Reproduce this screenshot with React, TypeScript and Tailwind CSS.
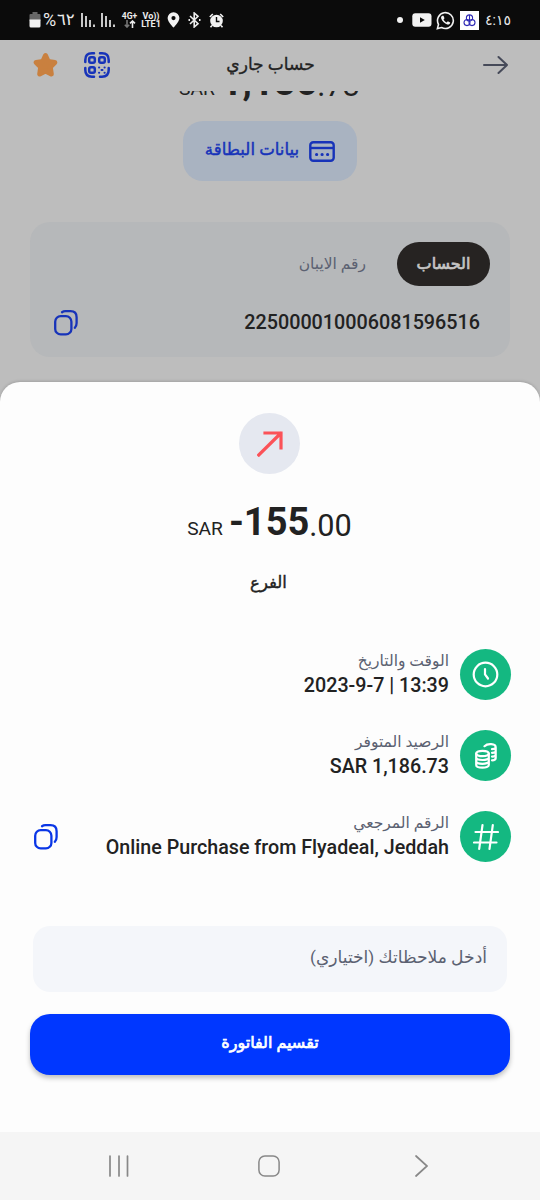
import type { ReactNode } from "react";

interface AmountProps {
  whole: string;
  fraction: string;
}

const Amount: React.FC<AmountProps> = ({ whole, fraction }) => (
  <div className="flex h-10 items-baseline justify-center whitespace-pre pr-px leading-10 text-[#222]">
    <span className="mr-1.5 text-[19.2px]">SAR</span>
    <span className="text-[38px] font-bold">{whole}</span>
    <span className="relative top-px text-[30.7px]">{fraction}</span>
  </div>
);

const CopyIcon: React.FC<{ color: string }> = ({ color }) => (
  <svg width="24" height="26" viewBox="0 0 24 26" fill="none" stroke={color} strokeWidth="2.3" strokeLinecap="round">
    <rect x="1.2" y="6.2" width="16.2" height="18.2" rx="5.5" />
    <path d="M8 2.2C9 1.5 10 1.2 11.5 1.2H16.5C20.5 1.2 22.6 3.3 22.6 7.3V13C22.6 15.2 22 16.8 20.8 17.8" />
  </svg>
);

const QrIcon = () => (
  <svg width="26" height="26" viewBox="0 0 26 26" fill="none" stroke="#1733b9" strokeWidth="2.5" strokeLinecap="round">
    <path d="M1.3 10V8C1.3 3.7 3.7 1.3 8 1.3H10M16 1.3H18C22.3 1.3 24.7 3.7 24.7 8V10M1.3 16V18C1.3 22.3 3.7 24.7 8 24.7H10M16 24.7H18C22.3 24.7 24.7 22.3 24.7 18V16" />
    <rect x="5.2" y="5.2" width="5.6" height="5.6" rx="1.8" />
    <rect x="15.2" y="5.2" width="5.6" height="5.6" rx="1.8" />
    <rect x="5.2" y="15.2" width="5.6" height="5.6" rx="1.8" />
    <path strokeWidth="2" d="M15 15.5H15.2M20.5 15.5H20.7M17.5 18H18.5M15 20.8H15.2M20.5 20.8H20.7" />
  </svg>
);

const StatusBar = () => (
  <div className="flex h-10 shrink-0 items-center justify-between bg-[#0b0b0b] pl-[29px] pr-[29px] text-[#ececec]">
    <div className="flex items-center">
      <svg width="12" height="16" viewBox="0 0 12 16">
        <path fill="#666" d="M3.5 0H8.5V2H10.5Q11.5 2 11.5 3V9H.5V3Q.5 2 1.5 2H3.5Z" />
        <path fill="#f2f2f2" d="M.5 7.5H11.5V14Q11.5 15.5 10 15.5H2Q.5 15.5.5 14Z" />
      </svg>
      <span className="ml-[2px] w-[14px] text-[18px] leading-5">%</span>
      <span className="w-[18px] text-[16.5px] leading-5">٦٢</span>
      <svg className="ml-1.5" width="34" height="16" viewBox="0 0 34 16" stroke="#ececec" strokeWidth="1.7">
        <path d="M1 1V15M5 4V15M9 8V15M13 12.5V15M21 1V15M25 4V15M29 8V15M33 12.5V15" />
      </svg>
      <div className="ml-[6px] flex w-[17px] flex-col items-center text-[8.5px] font-bold leading-[8px]">
        <span>4G+</span>
        <svg width="12" height="8" viewBox="0 0 12 8" fill="none" strokeWidth="1.6">
          <path stroke="#777" d="M3 0V7M.8 4.7L3 7L5.2 4.7" />
          <path stroke="#ececec" d="M8.5 8V1M6 3.3L8.5 1L11 3.3" />
        </svg>
      </div>
      <div className="ml-[3px] flex w-5 flex-col items-center text-[9px] font-bold leading-[8px]">
        <span>Vo))</span>
        <span>LTE1</span>
      </div>
      <svg className="ml-[6px]" width="13" height="16" viewBox="0 0 13 16">
        <path fill="#f2f2f2" fillRule="evenodd" d="M6.5.3A5.8 5.8 0 0 0 .6 6.1C.6 10 6.5 15.7 6.5 15.7S12.4 10 12.4 6.1A5.8 5.8 0 0 0 6.5.3ZM6.5 4A2.1 2.1 0 1 1 6.5 8.2A2.1 2.1 0 0 1 6.5 4Z" />
      </svg>
      <svg className="ml-[7px]" width="15" height="16" viewBox="0 0 15 16" fill="none" stroke="#ececec" strokeWidth="1.6">
        <path d="M3 4L11 11.7L7.2 15V1L11 4.3L3 12" />
        <path d="M1.5 8H3M12 8H13.5" strokeWidth="1.8" />
      </svg>
      <svg className="ml-[7px]" width="15" height="15" viewBox="0 0 15 15">
        <circle cx="7.5" cy="8" r="6.3" fill="#f2f2f2" />
        <path fill="none" stroke="#f2f2f2" strokeWidth="1.6" d="M.8 4L3.8 1M14.2 4L11.2 1M3 12.5L1.5 14.3M12 12.5L13.5 14.3" />
        <path fill="none" stroke="#0b0b0b" strokeWidth="1.4" d="M7.5 4V8.5H10.5" />
      </svg>
    </div>
    <div className="flex items-center">
      <span className="size-[6px] rounded-full bg-[#f2f2f2]" />
      <svg className="ml-[9px]" width="20" height="14" viewBox="0 0 20 14">
        <rect x=".3" y=".3" width="19.2" height="13.4" rx="3" fill="#f2f2f2" />
        <path fill="#0b0b0b" d="M8 4.2L12.8 7L8 9.8Z" />
      </svg>
      <svg className="ml-1" width="19" height="19" viewBox="0 0 19 19">
        <path fill="none" stroke="#f2f2f2" strokeWidth="1.6" d="M1.4 17.6L2.5 13.4A7.9 7.9 0 1 1 5.6 16.5Z" />
        <path fill="#f2f2f2" d="M6.3 4.8C5.2 5.4 4.8 6.6 5.3 7.8C6.5 10.7 8.5 12.6 11.3 13.5C12.8 13.9 14 13.1 14.2 11.5L11.8 10.3L10.7 11.5C9.2 10.8 8.3 9.9 7.5 8.4L8.5 7.3L7.5 4.8Z" />
      </svg>
      <div className="ml-[5px] flex size-[19px] items-center justify-center bg-white">
        <svg width="13" height="13" viewBox="0 0 13 13" fill="none" stroke="#302bb5" strokeWidth="1.1">
          <circle cx="6.5" cy="4" r="3.1" />
          <circle cx="4" cy="8.6" r="3" />
          <circle cx="9" cy="8.6" r="3" />
          <path d="M6.5 1V6" />
        </svg>
      </div>
      <span dir="ltr" className="ml-[6px] w-[26px] text-[14px] leading-5">
        ٤:١٥
      </span>
    </div>
  </div>
);

interface DetailRowProps {
  label: string;
  value: string;
  icon: ReactNode;
  action?: ReactNode;
}

const DetailRow: React.FC<DetailRowProps> = ({ label, value, icon, action }) => (
  <div className="flex h-[51px] items-center pl-[34px] pr-[29px]">
    {action}
    <div className="ml-auto flex flex-col items-end">
      <span dir="rtl" className="-mt-[2px] mb-[2px] text-[15.5px] leading-6 text-[#5b6171]">{label}</span>
      <span className="-mt-px whitespace-nowrap text-[19.7px] font-medium leading-6 text-[#222]">{value}</span>
    </div>
    <div className="ml-[11px] flex size-[51px] items-center justify-center rounded-full bg-[#14b881]">{icon}</div>
  </div>
);

const App: React.FC = () => {
  return (
    <div className="flex h-[1200px] w-[540px] flex-col overflow-hidden bg-[#bdbdbd] font-[Roboto,'DejaVu_Sans',sans-serif]">
      <StatusBar />

      <header className="flex h-[51px] shrink-0 items-center justify-between pb-px pl-[33px] pr-[32px]">
        <div className="flex w-[77px] items-center justify-between">
          <svg width="25" height="26" viewBox="0 0 25 26">
            <path fill="#c9803f" stroke="#c9803f" strokeWidth="5" strokeLinejoin="round" d="M12.5 3.5L15.2 9.5L21.8 10.4L17.3 15.1L18.3 22L12.5 19L6.7 22L7.7 15.1L3.2 10.4L9.8 9.5Z" />
          </svg>
          <QrIcon />
        </div>
        <h1 dir="rtl" className="mb-[3px] text-[17px] leading-7 text-[#222] [-webkit-text-stroke:0.35px_#222]">حساب جاري</h1>
        <div className="flex w-[77px] justify-end">
          <svg width="25" height="20" viewBox="0 0 25 20" fill="none" stroke="#464a59" strokeWidth="2" strokeLinecap="round" strokeLinejoin="round">
            <path d="M1 10H24M15.5 2L24 10L15.5 18" />
          </svg>
        </div>
      </header>

      {/* balance scrolled under the header */}
      <div className="flex h-[30px] shrink-0 flex-col overflow-hidden">
        <div className="-mt-[29px]">
          <Amount whole="1,186" fraction=".73" />
        </div>
      </div>

      <div className="mx-auto flex h-[60px] w-[174px] shrink-0 items-center justify-center gap-[10px] rounded-[20px] bg-[#a9b3c1]">
        <span dir="rtl" className="mb-[3px] text-[16.6px] leading-6 text-[#1733b9] [-webkit-text-stroke:0.45px_#1733b9]">بيانات البطاقة</span>
        <svg width="26" height="21" viewBox="0 0 26 21" fill="none" stroke="#1733b9" strokeWidth="2.4">
          <rect x="1.3" y="1.3" width="23.4" height="18.4" rx="3" />
          <path d="M1.3 7H24.7" />
          <path strokeLinecap="round" strokeWidth="3" d="M7.5 13.5H7.7M13 13.5H13.2M18.5 13.5H18.7" />
        </svg>
      </div>

      <section className="mx-[30px] mt-[41px] h-[135px] shrink-0 rounded-[20px] bg-[#b6b8ba] pt-5">
        <div className="flex items-center justify-end gap-[31px] pr-5">
          <span dir="rtl" className="text-[15.5px] leading-6 text-[#5b6171]">رقم الايبان</span>
          <span dir="rtl" className="flex h-11 w-[93px] items-center justify-center rounded-full bg-[#262322] text-[16px] leading-6 text-[#c4c4c4] [-webkit-text-stroke:0.7px_#c4c4c4]">
            الحساب
          </span>
        </div>
        <div className="mt-[22px] flex items-center justify-between pl-6 pr-[30px]">
          <CopyIcon color="#1733b9" />
          <span className="pt-px text-[19.75px] font-medium leading-7 text-[#222]">225000010006081596516</span>
        </div>
      </section>

      <main className="mt-[25px] flex h-[750px] shrink-0 flex-col rounded-t-[20px] bg-[#fdfdfd] pt-[31px] shadow-[0_-1px_3px_rgba(0,0,0,0.15)]">
        <div className="ml-[239px] flex size-[61px] items-center justify-center rounded-full bg-[#e5e8f0]">
          <svg width="26" height="26" viewBox="0 0 26 26" fill="none" stroke="#fb5258" strokeWidth="3.2" strokeLinecap="square">
            <path d="M1.8 24L23.5 2.5M8 2H24V17" />
          </svg>
        </div>
        <div className="mt-[28px]">
          <Amount whole="-155" fraction=".00" />
        </div>
        <p dir="rtl" className="mt-[27px] pr-[3px] text-center text-[16.5px] leading-7 text-[#222] [-webkit-text-stroke:0.4px_#222]">الفرع</p>

        <div className="mt-[52px] flex flex-col gap-[30px]">
          <DetailRow
            label="الوقت والتاريخ"
            value="2023-9-7 | 13:39"
            icon={
              <svg width="27" height="27" viewBox="0 0 27 27" fill="none" stroke="#fff" strokeWidth="2.2" strokeLinecap="round">
                <circle cx="13.5" cy="13.5" r="11.8" />
                <path d="M13 8V13.5L16 17.5" />
              </svg>
            }
          />
          <DetailRow
            label="الرصيد المتوفر"
            value="SAR 1,186.73"
            icon={
              <svg width="22" height="26" viewBox="0 0 22 26" fill="none" stroke="#fff" strokeWidth="2.2" strokeLinecap="round">
                <ellipse cx="7.5" cy="10.5" rx="6.3" ry="2.7" />
                <path d="M1.2 10.5V22C1.2 25.5 13.8 25.5 13.8 22V10.5M1.2 14.5C1.2 17.8 13.8 17.8 13.8 14.5M1.2 18.3C1.2 21.6 13.8 21.6 13.8 18.3" />
                <path d="M9.5 3.2C12.5.2 20.7.5 20.7 4.3V15C20.7 16.5 19 17.3 17 17.3M17 6.2C19 6.2 20.7 5.4 20.7 4.3M17 9.8C19 9.8 20.7 9 20.7 8M17 13.6C19 13.6 20.7 12.8 20.7 11.6" />
              </svg>
            }
          />
          <DetailRow
            label="الرقم المرجعي"
            value="Online Purchase from Flyadeal, Jeddah"
            action={<CopyIcon color="#0a36e6" />}
            icon={
              <svg width="26" height="26" viewBox="0 0 26 26" fill="none" stroke="#fff" strokeWidth="2.2" strokeLinecap="round">
                <path d="M9.5 1.2L6.2 24.8M19.8 1.2L16.5 24.8M2.5 8H25M1 18.5H23.5" />
              </svg>
            }
          />
        </div>

        <div dir="rtl" className="mx-[33px] mt-[64px] flex h-[66px] items-center rounded-[17px] bg-[#f4f6fa] px-5 pb-[3px] text-[17.1px] text-[#5b6171]">
          أدخل ملاحظاتك (اختياري)
        </div>
        <button dir="rtl" className="mx-[30px] mt-[22px] h-[61px] rounded-[20px] bg-[#0037ff] pb-[3px] text-[16px] text-white shadow-[0_3px_5px_rgba(0,0,0,0.25)] [-webkit-text-stroke:0.7px_#fff]">
          تقسيم الفاتورة
        </button>
      </main>

      <nav className="flex h-[68px] shrink-0 items-center justify-between bg-[#f5f5f5] pl-[108px] pr-[112px]">
        <svg width="22" height="22" viewBox="0 0 22 22" stroke="#888" strokeWidth="1.7" strokeLinecap="round">
          <path d="M2 1V21M11 1V21M19.5 1V21" />
        </svg>
        <svg className="-ml-[7px]" width="22" height="22" viewBox="0 0 22 22" fill="none" stroke="#888" strokeWidth="1.5">
          <rect x=".9" y=".9" width="20.2" height="20.2" rx="6" />
        </svg>
        <svg width="13" height="22" viewBox="0 0 13 22" fill="none" stroke="#888" strokeWidth="1.7" strokeLinecap="round">
          <path d="M1 1L12 11L1 21" />
        </svg>
      </nav>
    </div>
  );
};

export default App;
